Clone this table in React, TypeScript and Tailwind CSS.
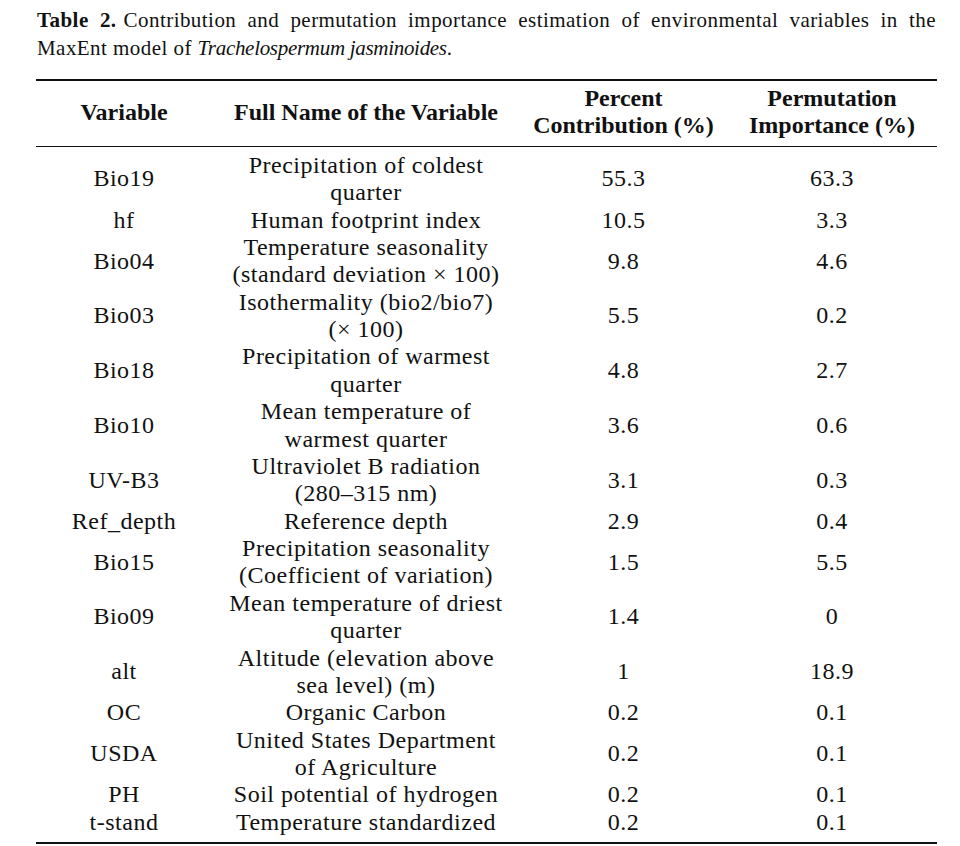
import React from 'react';

type Row = {
  variable: string;
  name: string[];
  contribution: string;
  permutation: string;
};

const rows: Row[] = [
  { variable: 'Bio19', name: ['Precipitation of coldest', 'quarter'], contribution: '55.3', permutation: '63.3' },
  { variable: 'hf', name: ['Human footprint index'], contribution: '10.5', permutation: '3.3' },
  { variable: 'Bio04', name: ['Temperature seasonality', '(standard deviation × 100)'], contribution: '9.8', permutation: '4.6' },
  { variable: 'Bio03', name: ['Isothermality (bio2/bio7)', '(× 100)'], contribution: '5.5', permutation: '0.2' },
  { variable: 'Bio18', name: ['Precipitation of warmest', 'quarter'], contribution: '4.8', permutation: '2.7' },
  { variable: 'Bio10', name: ['Mean temperature of', 'warmest quarter'], contribution: '3.6', permutation: '0.6' },
  { variable: 'UV-B3', name: ['Ultraviolet B radiation', '(280–315 nm)'], contribution: '3.1', permutation: '0.3' },
  { variable: 'Ref_depth', name: ['Reference depth'], contribution: '2.9', permutation: '0.4' },
  { variable: 'Bio15', name: ['Precipitation seasonality', '(Coefficient of variation)'], contribution: '1.5', permutation: '5.5' },
  { variable: 'Bio09', name: ['Mean temperature of driest', 'quarter'], contribution: '1.4', permutation: '0' },
  { variable: 'alt', name: ['Altitude (elevation above', 'sea level) (m)'], contribution: '1', permutation: '18.9' },
  { variable: 'OC', name: ['Organic Carbon'], contribution: '0.2', permutation: '0.1' },
  { variable: 'USDA', name: ['United States Department', 'of Agriculture'], contribution: '0.2', permutation: '0.1' },
  { variable: 'PH', name: ['Soil potential of hydrogen'], contribution: '0.2', permutation: '0.1' },
  { variable: 't-stand', name: ['Temperature standardized'], contribution: '0.2', permutation: '0.1' },
];

const grid = 'grid grid-cols-[176px_308px_207px_210px]';
const cell = 'flex flex-col items-center justify-center text-center whitespace-nowrap';

export default function App() {
  return (
    <div className="min-h-[846px] w-[960px] bg-white text-[#111] [font-family:'Liberation_Serif','Times_New_Roman',serif]">
      <div className="pl-[37px] pr-[24px] pt-[6px] text-[21px] leading-[28px] tracking-[0.45px]">
        <p className="text-justify [text-align-last:justify]">
          <span className="font-bold">Table 2.</span>
          <span className="ml-[7px]">
            Contribution and permutation importance estimation of environmental variables in the
          </span>
        </p>
        <p>
          MaxEnt model of <i className="tracking-[-0.3px]">Trachelospermum jasminoides</i>.
        </p>
      </div>

      <div className="ml-[36px] mt-[17px] w-[901px]">
        <div className="border-t-2 border-[#111]" />
        <div className={`${grid} pt-[4px] pb-[6px] text-[24px] leading-[27.375px] font-bold`}>
          <div className={cell}>Variable</div>
          <div className={cell}>Full Name of the Variable</div>
          <div className={cell}>
            <span>Percent</span>
            <span>Contribution (%)</span>
          </div>
          <div className={cell}>
            <span>Permutation</span>
            <span>Importance (%)</span>
          </div>
        </div>
        <div className="border-t border-[#111]" />

        <div className="pt-[5px] pb-[6px] text-[24px] leading-[27.375px] tracking-[0.5px]">
          {rows.map((row) => (
            <div key={row.variable} className={grid}>
              <div className={cell}>{row.variable}</div>
              <div className={cell}>
                {row.name.map((line) => (
                  <span key={line}>{line}</span>
                ))}
              </div>
              <div className={cell}>{row.contribution}</div>
              <div className={cell}>{row.permutation}</div>
            </div>
          ))}
        </div>
        <div className="border-t-2 border-[#111]" />
      </div>
    </div>
  );
}
